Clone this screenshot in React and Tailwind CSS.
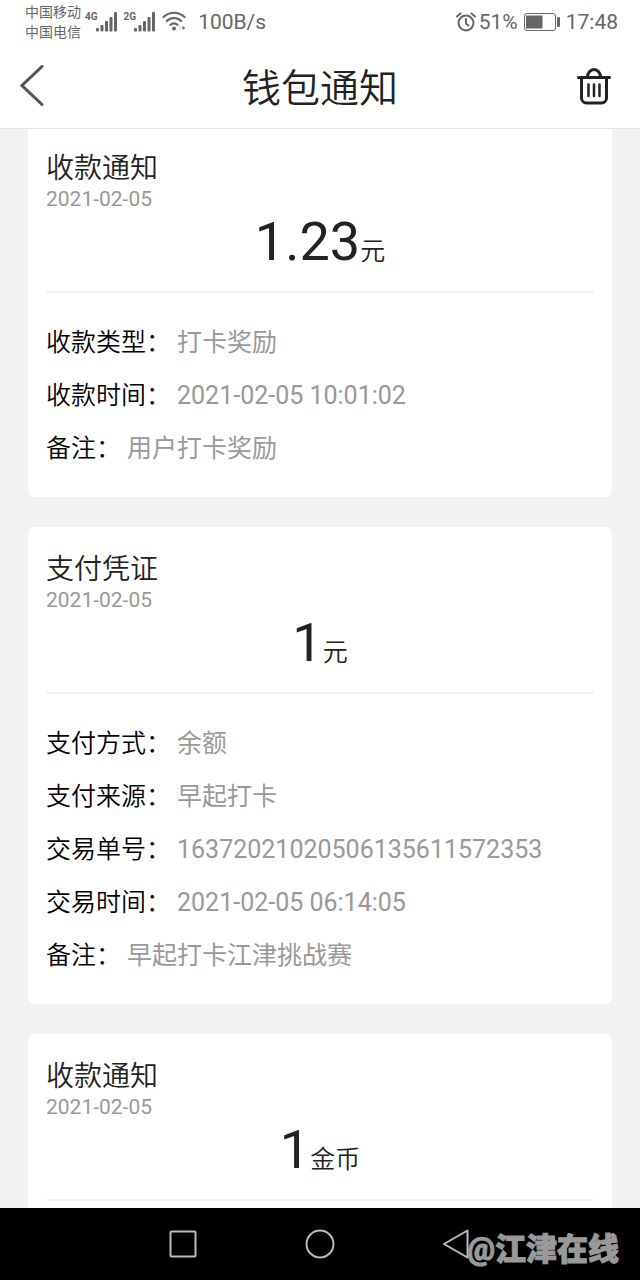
import React from 'react';

const notices = [
  {
    title: '收款通知',
    date: '2021-02-05',
    amount: '1.23',
    unit: '元',
    rows: [
      ['收款类型：', '打卡奖励'],
      ['收款时间：', '2021-02-05 10:01:02'],
      ['备注：', '用户打卡奖励'],
    ],
  },
  {
    title: '支付凭证',
    date: '2021-02-05',
    amount: '1',
    unit: '元',
    rows: [
      ['支付方式：', '余额'],
      ['支付来源：', '早起打卡'],
      ['交易单号：', '16372021020506135611572353'],
      ['交易时间：', '2021-02-05 06:14:05'],
      ['备注：', '早起打卡江津挑战赛'],
    ],
  },
  {
    title: '收款通知',
    date: '2021-02-05',
    amount: '1',
    unit: '金币',
    rows: [],
  },
];

function Signal({ label }) {
  return (
    <span className="flex items-start">
      <span className="text-[10px] leading-[12px] font-bold">{label}</span>
      <svg width="22" height="22" viewBox="0 0 22 22" fill="currentColor" className="-ml-0.5">
        <rect x="0" y="17" width="3" height="3.500" rx="1" />
        <rect x="4.500" y="14" width="3" height="6.500" rx="1" />
        <rect x="9" y="10" width="3" height="10.500" rx="1" />
        <rect x="13.500" y="6" width="3" height="14.500" rx="1" />
        <rect x="18" y="1" width="3" height="19.500" rx="1" />
      </svg>
    </span>
  );
}

function WifiIcon() {
  return (
    <svg width="24" height="20" viewBox="0 0 24 20" fill="none" stroke="currentColor" strokeWidth="2.200" strokeLinecap="round">
      <path d="M1.500 6C7.500.300 16.500.300 22.500 6" />
      <path d="M4.800 10C9 6 15 6 19.200 10" />
      <path d="M8.500 13.800c2.200-1.900 4.800-1.900 7 0" />
      <circle cx="12" cy="17.500" r="2" fill="currentColor" stroke="none" />
      <path d="M18 17.500v-2" strokeWidth="1" opacity="0.4" />
      <path d="M20.500 15l3 2-3 2z" fill="currentColor" stroke="none" />
    </svg>
  );
}

function AlarmIcon() {
  return (
    <svg width="20" height="20" viewBox="0 0 20 20" fill="none" stroke="currentColor" strokeWidth="2" strokeLinecap="round">
      <circle cx="10" cy="11" r="7.500" />
      <path d="M10 7v4.500l2.500 2M1 4.500 4.500 1.500M19 4.500 15.500 1.500" />
    </svg>
  );
}

function BatteryIcon() {
  return (
    <svg width="36" height="18" viewBox="0 0 36 18">
      <rect x="0.500" y="0.500" width="31" height="17" rx="2.500" fill="none" stroke="currentColor" />
      <rect x="2" y="2.500" width="16.500" height="13" fill="currentColor" />
      <rect x="33" y="4" width="3" height="10" rx="1" fill="currentColor" />
    </svg>
  );
}

function StatusBar() {
  return (
    <div className="flex h-[44px] shrink-0 items-center justify-between pl-[25px] pr-[22px] text-[#666]">
      <div className="flex items-center">
        <div className="text-[14px] leading-[20px]">
          <div>中国移动</div>
          <div>中国电信</div>
        </div>
        <div className="ml-1 flex gap-1.5">
          <Signal label="4G" />
          <Signal label="2G" />
          <WifiIcon />
        </div>
        <span className="ml-3 text-[21px] leading-[24px]">100B/s</span>
      </div>
      <div className="flex items-center text-[21px] leading-[24px]">
        <AlarmIcon />
        <span className="ml-[3px]">51%</span>
        <span className="ml-1.5"><BatteryIcon /></span>
        <span className="ml-1.5">17:48</span>
      </div>
    </div>
  );
}

function NavBar() {
  return (
    <header className="grid h-[85px] shrink-0 grid-cols-[1fr_auto_1fr] items-center border-b border-[#e2e2e2] px-[20px]">
      <button aria-label="返回" className="justify-self-start text-[#555]">
        <svg width="26" height="42" viewBox="0 0 26 42" fill="none" stroke="currentColor" strokeWidth="3" strokeLinecap="round">
          <path d="M22 1.500 2 20.500l20 19" />
        </svg>
      </button>
      <h1 className="pt-1.5 text-[39px] leading-[56px] font-[350] text-[#222]">钱包通知</h1>
      <button aria-label="删除" className="mr-[9px] justify-self-end text-[#222]">
        <svg width="34" height="38" viewBox="0 0 34 38" fill="none" stroke="currentColor" strokeWidth="3" strokeLinecap="round">
          <path d="M1.500 10.500h31M4.500 11v20a5 5 0 0 0 5 5h15a5 5 0 0 0 5-5V11M10.500 10a6.500 7.500 0 0 1 13 0" />
          <path d="M11.500 17.500v11.500M17 17.500v11.500M22.500 17.500v11.500" strokeWidth="2.500" />
        </svg>
      </button>
    </header>
  );
}

function NoticeCard({ notice }) {
  return (
    <section className="rounded-[7px] bg-white px-[18px] pt-6 pb-[22px]">
      <h2 className="text-[28px] leading-[38px] font-[350] text-[#222]">{notice.title}</h2>
      <p className="text-[21px] leading-[22px] text-[#999]">{notice.date}</p>
      <p className="border-b-2 border-[#f2f2f2] pb-[17px] text-center text-[54px] leading-[64px] text-[#222]">
        {notice.amount}
        <span className="text-[25px] leading-none font-[350]">{notice.unit}</span>
      </p>
      <dl className="pt-[23px] text-[25px] leading-[53px]">
        {notice.rows.map(([label, value]) => (
          <div key={label} className="flex gap-1.5">
            <dt className="font-[350] text-black">{label}</dt>
            <dd className="text-[#999]">{value}</dd>
          </div>
        ))}
      </dl>
    </section>
  );
}

function SystemBar() {
  return (
    <footer className="relative flex h-[72px] shrink-0 items-center justify-center gap-[105px] bg-black text-[#bbb]">
      <button aria-label="最近任务">
        <svg width="32" height="32" viewBox="0 0 32 32" fill="none" stroke="currentColor" strokeWidth="2">
          <rect x="3.500" y="3.500" width="25" height="25" rx="1" />
        </svg>
      </button>
      <button aria-label="主屏幕">
        <svg width="32" height="32" viewBox="0 0 32 32" fill="none" stroke="currentColor" strokeWidth="2">
          <circle cx="16" cy="16" r="13.500" />
        </svg>
      </button>
      <button aria-label="后退">
        <svg width="32" height="32" viewBox="0 0 32 32" fill="none" stroke="currentColor" strokeWidth="2" strokeLinejoin="round">
          <path d="M3 16 26.500 2.500v27z" />
        </svg>
      </button>
      <span className="absolute right-[21px] bottom-[8px] text-[31px] leading-[44px] font-black text-[#999] [-webkit-text-stroke:1px_#999]">@江津在线</span>
    </footer>
  );
}

export default function App() {
  return (
    <div className="flex h-screen flex-col bg-white font-[Roboto,'Noto_Sans_CJK_SC',sans-serif]" lang="zh-CN">
      <StatusBar />
      <NavBar />
      <main className="min-h-0 flex-1 overflow-hidden bg-[#f2f2f2] px-7">
        <div className="-mt-[3px] flex flex-col gap-[30px]">
          {notices.map((notice, i) => (
            <NoticeCard key={i} notice={notice} />
          ))}
        </div>
      </main>
      <SystemBar />
    </div>
  );
}
